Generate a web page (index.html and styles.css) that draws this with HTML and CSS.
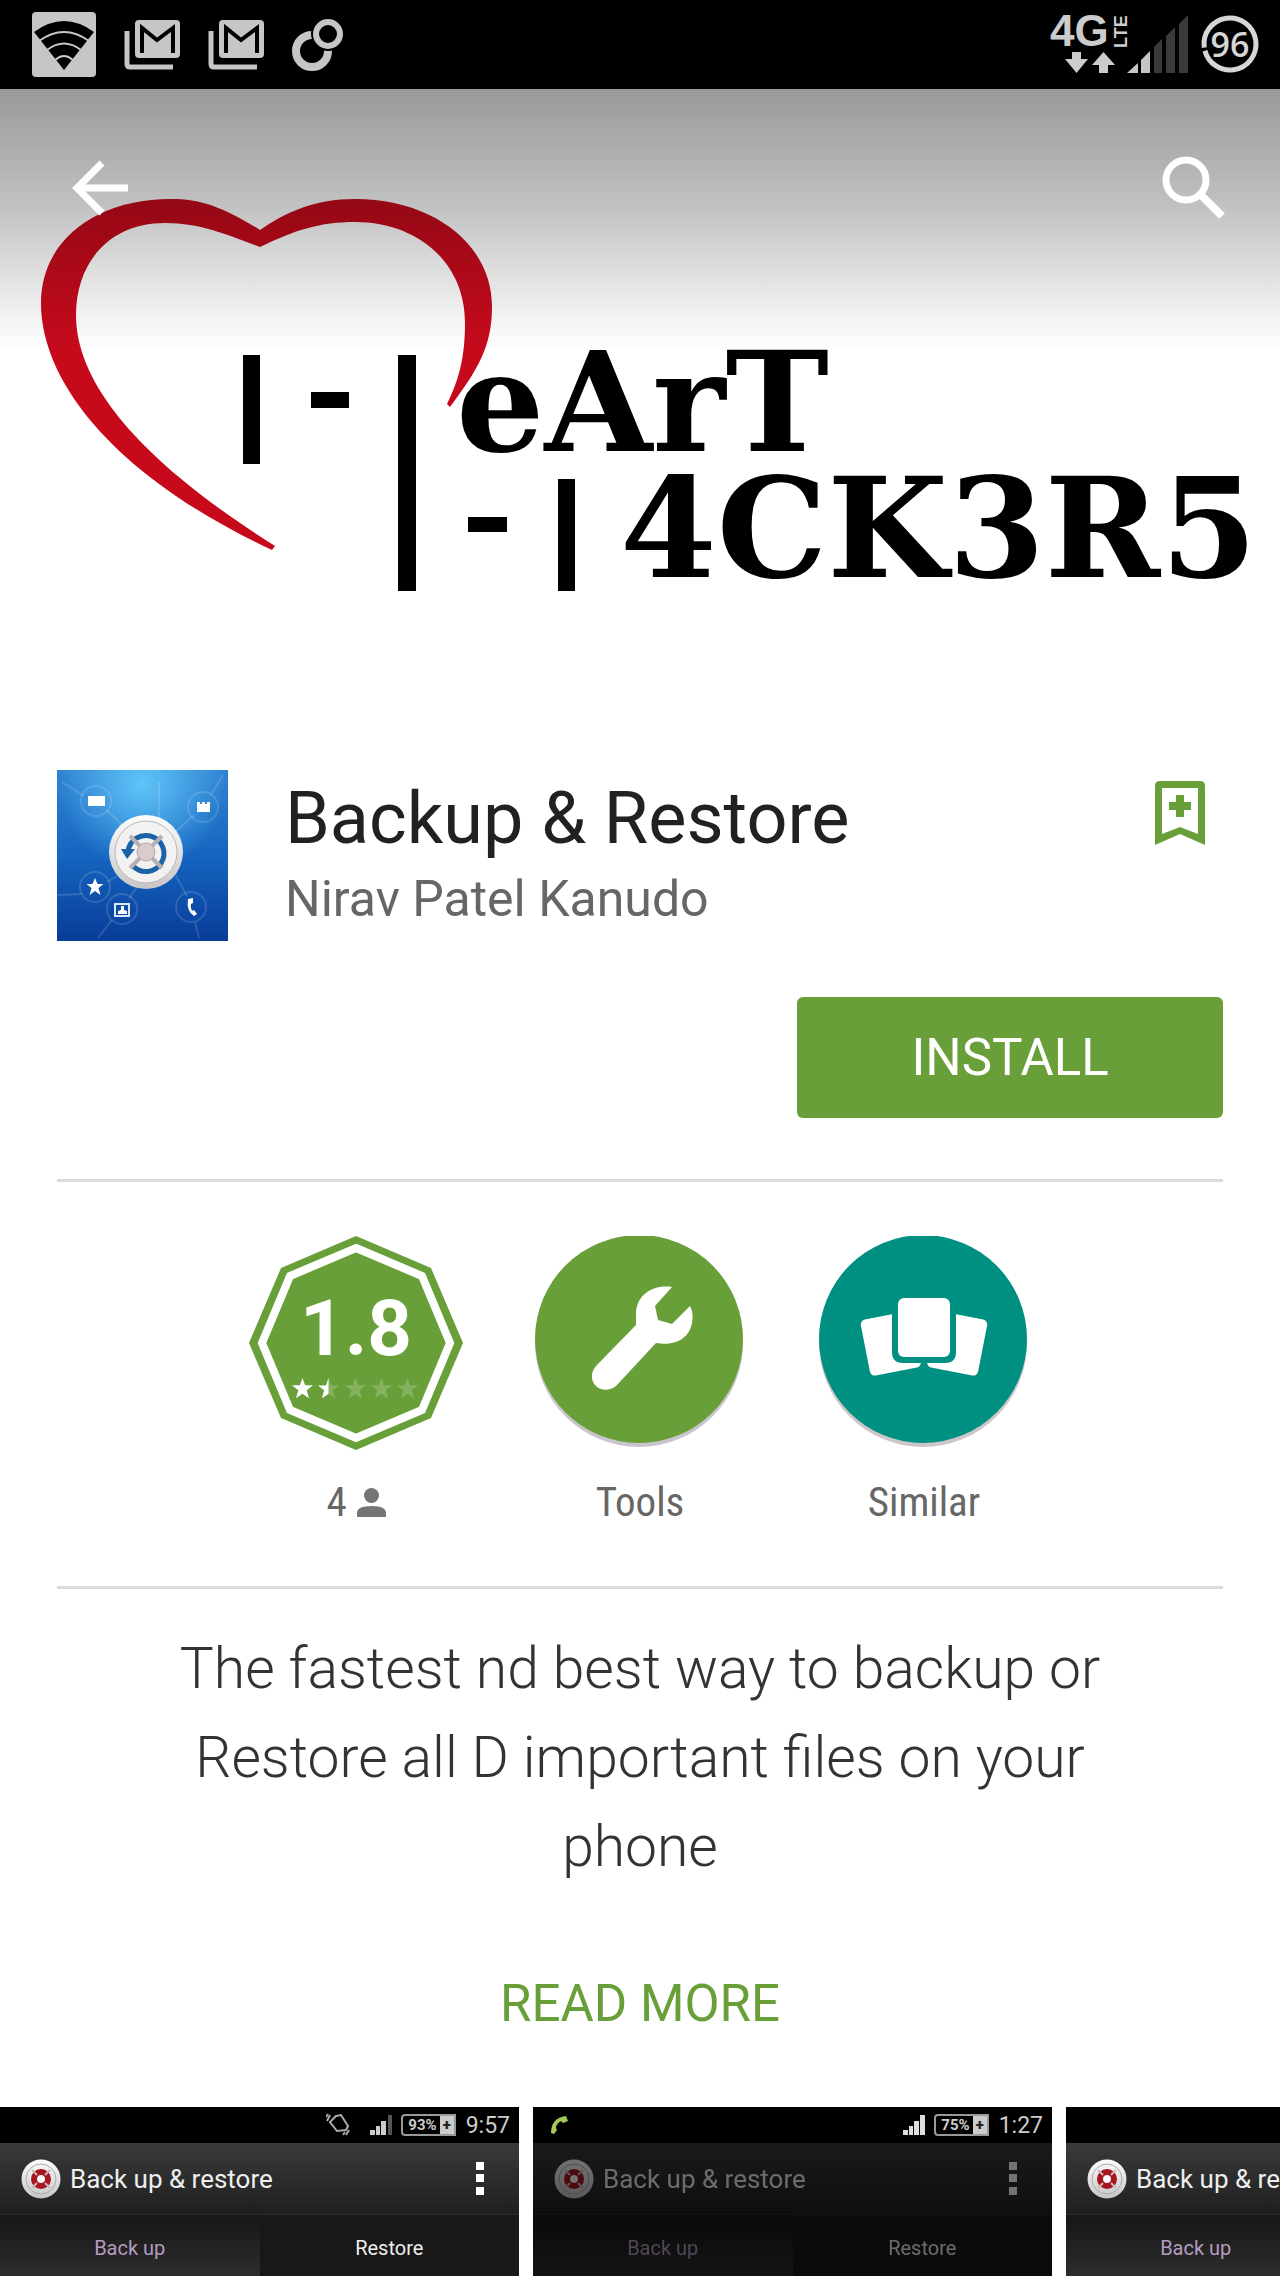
FILE: index.html
```html
<!DOCTYPE html>
<html lang="en">
<head>
<meta charset="utf-8">
<title>Backup &amp; Restore</title>
<meta name="viewport" content="width=device-width">
<link rel="stylesheet" href="styles.css">
</head>
<body>
<svg class="defs" width="0" height="0" aria-hidden="true">
  <defs>
    <linearGradient id="disc" x1="0" y1="0" x2="0" y2="1"><stop offset="0" stop-color="#fdfdfd"/><stop offset="1" stop-color="#c6c6c6"/></linearGradient>
    <symbol id="mail" viewBox="0 0 56 50">
      <path d="M3 11v33q0 3 3 3h43" fill="none" stroke="#c6c6c6" stroke-width="5"/>
      <rect x="11" y="0" width="45" height="38" rx="4" fill="#c6c6c6"/>
      <path d="M18 33V8l15 12L49 8v25" fill="none" stroke="#000" stroke-width="4"/>
    </symbol>
    <symbol id="star" viewBox="0 0 20 20"><path d="M10 0l2.500 7H20l-6 4.600 2.200 7.800L10 15l-6.200 4.400L6 11.600 0 7h7.500z"/></symbol>
    <symbol id="ring" viewBox="0 0 40 40">
      <circle cx="20" cy="20" r="19.500" fill="url(#disc)"/>
      <circle cx="20" cy="20" r="15" fill="none" stroke="#aaa"/>
      <circle cx="20" cy="20" r="7" fill="#e8dede" stroke="#a8141f" stroke-width="6"/>
      <path d="M11 11l5 5m8 8l5 5m0-18l-5 5m-8 8l-5 5" stroke="#c9b9b9" stroke-width="2"/>
      <circle cx="20" cy="20" r="3.500" fill="#fff"/>
    </symbol>
  </defs>
</svg>

<header class="status">
  <div class="status-left">
    <svg width="64" height="65" viewBox="0 0 64 65" aria-label="Wi-Fi">
      <rect width="64" height="65" rx="4" fill="#c6c6c6"/>
      <path d="M32 58L2 20Q32-2 62 20z" fill="#000"/>
      <g fill="none" stroke="#c6c6c6" stroke-width="2"><path d="M7 29Q32 11 57 29M15 38Q32 25 49 38M23 48Q32 40 41 48"/></g>
    </svg>
    <svg width="56" height="50" aria-label="Mail"><use href="#mail"/></svg>
    <svg width="56" height="50" aria-label="Mail"><use href="#mail"/></svg>
    <svg width="52" height="52" viewBox="0 0 52 52" aria-hidden="true">
      <circle cx="20" cy="32" r="16" fill="none" stroke="#c6c6c6" stroke-width="8"/>
      <circle cx="36" cy="15" r="17" fill="#000"/>
      <circle cx="36" cy="15" r="12" fill="none" stroke="#c6c6c6" stroke-width="6"/>
    </svg>
  </div>
  <svg class="status-right" width="210" height="65" viewBox="0 0 210 65" aria-label="4G LTE, battery 96">
    <text x="0" y="34" class="net">4G</text>
    <text class="lte" transform="translate(77 36) rotate(-90)">LTE</text>
    <path d="M22 40h9v7h7L26.500 61 15 47h7zM58 61h-9v-8h-7l11.500-13L65 53h-7z" fill="#ccc"/>
    <path d="M77 61l11-10v10zM91 61V48l9-9v22z" fill="#c6c6c6"/>
    <path d="M104 61V35l8-8v34zM116 61V24l9-9v46zM129 61V12l9-9v58z" fill="#3a3a3a"/>
    <circle cx="180" cy="32" r="26" fill="none" stroke="#d6d6d6" stroke-width="5" stroke-dasharray="159 4" transform="rotate(172 180 32)"/>
    <text x="180" y="45" class="battery">96</text>
  </svg>
</header>

<main>
  <section class="hero">
    <svg class="art" viewBox="0 0 1280 600" role="img" aria-label="I heart hackers">
      <path d="M260 141C223 118 201 110 171 110C95 110 41 152 41 214C41 290 110 385 272 461L275 457C150 378 76 300 76 226C76 174 109 134 165 134C202 134 230 147 260 158C295 141 320 133 355 133C416 133 465 172 465 234C465 268 459 291 447 315L450 318C477 282 492 258 492 218C492 155 433 110 355 110C315 110 286 123 260 141Z" fill="#c60a1c"/>
      <path d="M243 266h17v109h-17zM311 303h38v16h-38zM398 266h18v236h-18zM468 428h39v15h-39zM558 390h17v112h-17z"/>
      <text x="456" y="362">eArT</text>
      <text x="620" y="488">4CK3R5</text>
    </svg>
    <nav class="toolbar">
      <button class="icon-btn" aria-label="Back"><svg width="57" height="56" viewBox="0 0 57 56" fill="none" stroke="#fff" stroke-width="7"><path d="M57 28H6M31 3L6 28l25 25"/></svg></button>
      <button class="icon-btn" aria-label="Search"><svg width="64" height="64" viewBox="0 0 64 64" fill="none" stroke="#fff" stroke-width="7"><circle cx="24" cy="24" r="20"/><path d="M39 39l21 21" stroke-width="8"/></svg></button>
    </nav>
  </section>

  <div class="content">
    <section class="app">
      <svg class="app-icon" viewBox="0 0 171 171" aria-hidden="true">
        <defs>
          <linearGradient id="blue" x1="0" y1="0" x2="0" y2="1"><stop offset="0" stop-color="#2f83d2"/><stop offset=".5" stop-color="#1565c0"/><stop offset="1" stop-color="#083c98"/></linearGradient>
          <radialGradient id="glow" cx=".5" cy=".08" r=".5"><stop offset="0" stop-color="#5fc4f8"/><stop offset="1" stop-color="#5fc4f8" stop-opacity="0"/></radialGradient>
        </defs>
        <rect width="171" height="171" fill="url(#blue)"/><rect width="171" height="171" fill="url(#glow)"/>
        <g fill="none" stroke="#fff" stroke-opacity=".14" stroke-width="2"><path d="M5 12l22 14M50 40l20 20M166 5l-12 20M137 45l-20 18M102 12v35M0 125l25-1M50 112l14-8M80 117l-8 12M55 150l-14 18M118 104l12 22M138 152l4 16"/><circle cx="39" cy="31" r="15"/><circle cx="146" cy="37" r="15"/><circle cx="38" cy="117" r="15"/><circle cx="65" cy="139" r="15"/><circle cx="134" cy="137" r="15"/></g>
        <circle cx="89" cy="82" r="37" fill="url(#disc)"/>
        <circle cx="89" cy="82" r="31" fill="#f2f2f2" stroke="#c2b5b5"/>
        <path d="M71 82a18 18 0 1 1 5 14" fill="none" stroke="#1c62a8" stroke-width="5"/><path d="M64 79h14l-8 10z" fill="#1c62a8"/>
        <path d="M73 66l32 32m0-32L73 98" stroke="#b9aeb2" stroke-width="4"/><circle cx="89" cy="82" r="9" fill="#d8cccc" stroke="#b5a7ab"/>
        <path d="M31 26h17v10H31zM140 32h3v2h2v-2h3v2h2v-2h3v10h-13z" fill="#fff"/>
        <path d="M38 108l2.500 6h6l-5 4 2 7-5.500-4-5.500 4 2-7-5-4h6z" fill="#fff"/>
        <rect x="58" y="134" width="14" height="12" fill="none" stroke="#dbe6f7" stroke-width="2"/><path d="M61 144v-3l3-1v-4h3v4l3 1v3z" fill="#fff"/>
        <path d="M131 129q-2 12 6 17l3-2-3-4-2 1q-2-4-1-7l2-1v-5z" fill="#fff"/>
      </svg>
      <div class="app-name">
        <h1>Backup &amp; Restore</h1>
        <p>Nirav Patel Kanudo</p>
      </div>
      <button class="icon-btn wish" aria-label="Add to wishlist"><svg width="50" height="64" viewBox="0 0 50 64"><path d="M5 0h40q5 0 5 5v59L25 53 0 64V5q0-5 5-5zM7 7v46l18-7 18 7V7z" fill="#689f38" fill-rule="evenodd"/><path d="M21 14h8v7h7v8h-7v7h-8v-7h-7v-8h7z" fill="#689f38"/></svg></button>
    </section>
    <div class="actions"><button class="install">INSTALL</button></div>

    <section class="facts">
      <a class="fact" href="#reviews">
        <svg width="214" height="214" viewBox="0 0 214 214" aria-label="Rated 1.8 of 5">
          <path d="M107 0l75 32 32 75-32 75-75 32-75-32L0 107l32-75z" fill="#689f38"/>
          <path d="M107 12l66 28 28 67-28 67-66 28-66-28-28-67 28-67z" fill="none" stroke="#fff" stroke-width="8"/>
          <text x="107" y="119" class="score">1.8</text>
          <g fill="#fff"><use href="#star" x="43" y="142" width="21" height="21"/><g opacity=".2"><use href="#star" x="69" y="142" width="21" height="21"/><use href="#star" x="96" y="142" width="21" height="21"/><use href="#star" x="122" y="142" width="21" height="21"/><use href="#star" x="148" y="142" width="21" height="21"/></g>
          <path d="M79.500 142v15.700l-6.500 4.600 2.200-8L69 149.400h8z"/></g>
        </svg>
        <span class="label">4 <svg width="29" height="29" viewBox="0 0 29 29" fill="#757575" aria-label="people"><circle cx="14.500" cy="7.500" r="7.500"/><path d="M0 29v-4q0-7 14.500-7T29 25v4z"/></svg></span>
      </a>
      <a class="fact" href="#tools">
        <svg width="214" height="214" viewBox="0 0 214 214" aria-hidden="true">
          <circle cx="106" cy="107" r="104" fill="#c9c5cc"/><circle cx="106" cy="103" r="104" fill="#689f38"/>
          <path d="M139 51c-19-3-36 8-36 27v11L63 130c-6 7-5 15 0 20 5 5 14 5 20 0l40-43c17 3 33-3 36-20 1-6 1-11-2-17l-18 18-14-4-3-14z" fill="#fff"/>
        </svg>
        <span class="label">Tools</span>
      </a>
      <a class="fact" href="#similar">
        <svg width="214" height="214" viewBox="0 0 214 214" aria-hidden="true">
          <circle cx="106" cy="107" r="104" fill="#cfc6cb"/><circle cx="106" cy="103" r="104" fill="#009081"/>
          <g fill="#fff"><rect x="48" y="79" width="52" height="57" rx="5" transform="rotate(-11 74 108)"/><rect x="114" y="79" width="52" height="57" rx="5" transform="rotate(11 140 108)"/></g>
          <path d="M75 50h64v66q0 11-11 11H86q-11 0-11-11z" fill="#009081"/><rect x="81" y="62" width="52" height="59" rx="6" fill="#fff"/>
          <path d="M104 127h6l2 12h-10z" fill="#009081"/>
        </svg>
        <span class="label">Similar</span>
      </a>
    </section>

    <p class="about">The fastest nd best way to backup or Restore all D important files on your phone</p>
    <button class="more">READ MORE</button>
  </div>

  <section class="shots" aria-label="Screenshots">
    <article class="shot">
      <div class="shot-status">
        <svg width="25" height="24" viewBox="0 0 25 24" fill="none" stroke="#aaa" stroke-width="2"><path d="M10 3l5-1 7 11-2 4-9 1-7-9zM1 8l3-6M0 4l2-3M20 22l3-5M17 22l2-3"/></svg>
        <svg class="bars" width="22" height="20" viewBox="0 0 22 20" fill="#ccc"><path d="M0 15h5v5H0zM6 11h4v9H6zM11 6h5v14h-5z"/><path d="M18 0h4v20h-4z" fill="#555"/></svg>
        <span class="cell">93%<b>+</b></span><time>9:57</time>
      </div>
      <div class="shot-bar"><svg width="40" height="40"><use href="#ring"/></svg><span>Back up &amp; restore</span><i class="dots"></i></div>
      <div class="shot-tabs"><span class="on">Back up</span><span>Restore</span></div>
    </article>
    <article class="shot dim">
      <div class="shot-status">
        <svg class="call" width="17" height="18" viewBox="0 0 17 18"><path d="M0 17Q0 2 15 0l2 5-5 2-2-2Q5 8 5 12l1 2-3 4z" fill="#a5c957"/></svg>
        <svg class="bars" width="22" height="20" viewBox="0 0 22 20" fill="#ddd"><path d="M0 15h5v5H0zM6 11h4v9H6zM11 6h5v14h-5zM17 0h5v20h-5z"/></svg>
        <span class="cell">75%<b>+</b></span><time>1:27</time>
      </div>
      <div class="shot-bar"><svg width="40" height="40"><use href="#ring"/></svg><span>Back up &amp; restore</span><i class="dots"></i></div>
      <div class="shot-tabs"><span class="on">Back up</span><span>Restore</span></div>
    </article>
    <article class="shot">
      <div class="shot-status"></div>
      <div class="shot-bar"><svg width="40" height="40"><use href="#ring"/></svg><span>Back up &amp; restore</span><i class="dots"></i></div>
      <div class="shot-tabs"><span class="on">Back up</span><span>Restore</span></div>
    </article>
  </section>
</main>
</body>
</html>
```
FILE: styles.css
```css
* { box-sizing: border-box; }
body { margin: 0; background: #fff; color: #212121; font-family: Roboto, "Liberation Sans", sans-serif; overflow-x: hidden; }
h1, p { margin: 0; font-weight: 400; }
svg { display: block; flex: none; }
button { border: 0; background: none; padding: 0; font: inherit; cursor: pointer; }
a { color: inherit; text-decoration: none; }
.defs { position: absolute; }

.status { display: flex; justify-content: space-between; height: 89px; padding: 12px 20px 12px 32px; background: #000; }
.status-left { display: flex; align-items: center; gap: 28px; }
.status-right { overflow: visible; }
.net { font: bold 44px "Liberation Sans", sans-serif; fill: #ccc; }
.lte { font: bold 18px "Liberation Sans", sans-serif; fill: #ccc; }
.battery { font: 600 34px "Open Sans", sans-serif; fill: #d6d6d6; text-anchor: middle; }

.hero { position: relative; }
.hero::after { content: ""; position: absolute; inset: 0 0 auto; height: 264px; background: linear-gradient(rgba(0,0,0,.4), rgba(0,0,0,.24) 45%, rgba(0,0,0,.05) 86%, rgba(0,0,0,0)); }
.art { width: 100%; height: auto; }
.art text { font: bold 139px "DejaVu Serif", serif; }
.toolbar { position: absolute; z-index: 1; inset: 67px 54px auto 71px; display: flex; justify-content: space-between; align-items: center; }

.content { padding: 81px 57px 0; }
.app { display: flex; align-items: flex-start; }
.app-icon { width: 171px; height: 171px; }
.app-name { flex: 1; padding: 1px 0 0 57px; }
h1 { font-size: 72px; line-height: 96px; }
.app-name p { font-size: 50px; line-height: 64px; color: #666; }
.wish { margin: 11px 18px 0 0; }
.actions { display: flex; justify-content: flex-end; padding: 56px 0 61px; border-bottom: 3px solid #dcdcdc; }
.install { width: 426px; height: 121px; border-radius: 6px; background: #689f38; color: #fff; font-size: 51px; }

.facts { display: flex; justify-content: center; padding: 54px 0 56px; border-bottom: 3px solid #dcdcdc; }
.fact { width: 284px; display: flex; flex-direction: column; align-items: center; gap: 24px; }
.score { font-size: 78px; font-weight: 700; fill: #fff; text-anchor: middle; }
.label { display: flex; align-items: center; gap: 10px; font-family: "Roboto Condensed", Roboto, sans-serif; font-size: 41px; line-height: 56px; color: #666; }

.about { max-width: 960px; margin: 0 auto; padding-top: 35px; font-size: 57px; font-weight: 300; line-height: 89px; text-align: center; color: #333; }
.more { display: block; margin: 0 auto; padding: 81px 0 71px; font-size: 51px; line-height: 64px; color: #689f38; }

.shots { display: flex; gap: 14px; overflow: hidden; }
.shot { flex: none; width: 519px; background: #000; color: #eee; }
.shot-status { display: flex; align-items: center; justify-content: flex-end; height: 36px; padding-right: 9px; color: #ccc; }
.bars { margin: 0 9px 0 19px; }
.call { margin: 0 auto 0 18px; }
.cell { display: flex; align-items: center; height: 22px; margin-right: 10px; padding-left: 5px; border: 2px solid #999; border-radius: 4px 0 0 4px; font-size: 15px; font-weight: 700; }
.cell b { margin-left: 3px; padding: 0 3px; background: #ccc; color: #222; line-height: 18px; }
time { font-size: 23px; }
.shot-bar { display: flex; align-items: center; gap: 9px; height: 71px; padding: 0 35px 0 21px; background: linear-gradient(#3a3a3a, #1f1f1f); font-size: 26px; }
.dots { margin-left: auto; width: 8px; height: 33px; background: linear-gradient(#fff 0 8px, transparent 8px 12px, #fff 12px 20px, transparent 20px 25px, #fff 25px); }
.shot-tabs { display: flex; height: 62px; background: #181818; border-top: 1px solid #2c2c2c; font-size: 20px; line-height: 66px; text-align: center; }
.shot-tabs span { flex: 1; }
.shot-tabs .on { background: linear-gradient(#161616, #2d2d2d); color: #b49cc0; }
.dim .shot-bar, .dim .shot-tabs { filter: brightness(.45); }
```
